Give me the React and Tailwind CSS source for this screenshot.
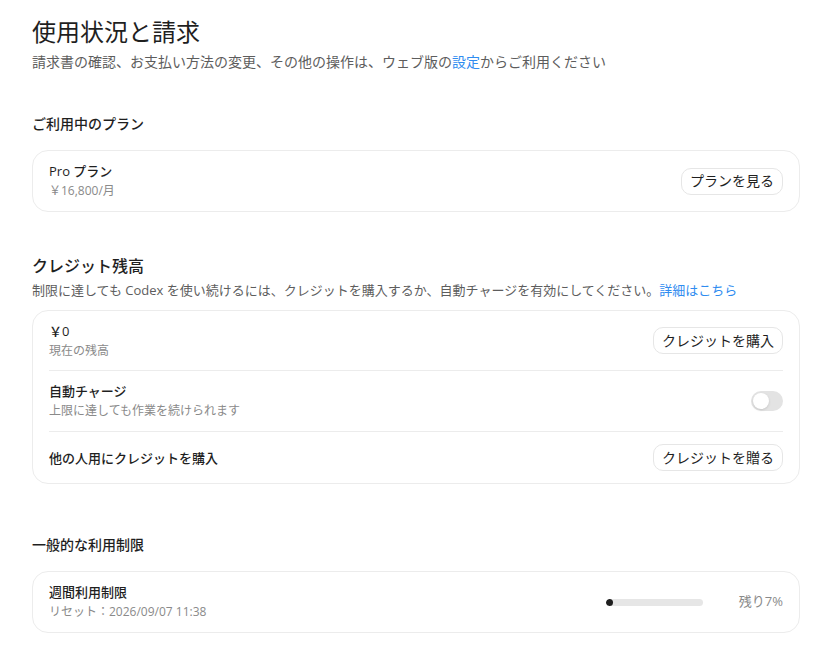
import { useState } from 'react';

const font = { fontFamily: '"Open Sans", "Noto Sans CJK JP", sans-serif' };

function Card({ children }) {
  return <div className="rounded-2xl border border-[#ececec] bg-white px-4">{children}</div>;
}

function PillButton({ children }) {
  return (
    <button className="h-[27px] rounded-[10px] border border-[#e6e6e6] bg-white px-[8px] text-[14px] leading-none text-[#1f1f1f]">
      {children}
    </button>
  );
}

function Row({ title, sub, right, className = '' }) {
  return (
    <div className={`flex items-center justify-between ${className}`}>
      <div>
        <p className="text-[13px] font-medium leading-5 text-[#1f1f1f]">{title}</p>
        {sub && <p className="text-[12px] leading-5 text-[#8a8a8a]">{sub}</p>}
      </div>
      {right}
    </div>
  );
}

function Toggle() {
  const [on, setOn] = useState(false);
  return (
    <button
      onClick={() => setOn(!on)}
      className={`flex h-5 w-8 items-center rounded-full p-[2px] ${on ? 'justify-end bg-[#1f1f1f]' : 'justify-start bg-[#e3e3e3]'}`}
    >
      <span className="h-4 w-4 rounded-full bg-white shadow-sm" />
    </button>
  );
}

export default function App() {
  const remaining = 7;

  return (
    <div className="min-h-[660px] bg-white pl-8 pr-7 pt-[14px]" style={font}>
      <h1 className="text-[24px] leading-9 text-[#1f1f1f]">使用状況と請求</h1>
      <p className="mt-[2px] text-[14px] leading-5 text-[#5d5d5d]">
        請求書の確認、お支払い方法の変更、その他の操作は、ウェブ版の<span className="text-[#2f8cf0]">設定</span>からご利用ください
      </p>

      {/* Current plan */}
      <h2 className="mt-[42px] text-[14px] font-medium leading-5 text-[#1f1f1f]">ご利用中のプラン</h2>
      <div className="mt-4">
        <Card>
          <Row className="h-[60px]" title="Pro プラン" sub="￥16,800/月" right={<PillButton>プランを見る</PillButton>} />
        </Card>
      </div>

      {/* Credits */}
      <h2 className="mt-[42px] text-[16px] font-medium leading-6 text-[#1f1f1f]">クレジット残高</h2>
      <p className="mt-[2px] text-[13px] leading-5 text-[#5d5d5d]">
        制限に達しても Codex を使い続けるには、クレジットを購入するか、自動チャージを有効にしてください。<span className="text-[#2f8cf0]">詳細はこちら</span>
      </p>
      <div className="mt-[10px]">
        <Card>
          <Row className="h-[60px] border-b border-[#ececec]" title="￥0" sub="現在の残高" right={<PillButton>クレジットを購入</PillButton>} />
          <Row className="h-[61px] border-b border-[#ececec]" title="自動チャージ" sub="上限に達しても作業を続けられます" right={<Toggle />} />
          <Row className="h-[51px]" title="他の人用にクレジットを購入" right={<PillButton>クレジットを贈る</PillButton>} />
        </Card>
      </div>

      {/* Usage limits */}
      <h2 className="mt-[51px] text-[14px] font-medium leading-5 text-[#1f1f1f]">一般的な利用制限</h2>
      <div className="mt-4">
        <Card>
          <Row
            className="h-[60px]"
            title="週間利用制限"
            sub="リセット：2026/09/07 11:38"
            right={
              <div className="flex items-center">
                <div className="h-[7px] w-[97px] overflow-hidden rounded-full bg-[#e6e6e6]">
                  <div className="h-full rounded-full bg-[#1f1f1f]" style={{ width: `${remaining}%` }} />
                </div>
                <span className="ml-9 text-[13px] text-[#8a8a8a]">残り{remaining}%</span>
              </div>
            }
          />
        </Card>
      </div>
    </div>
  );
}
